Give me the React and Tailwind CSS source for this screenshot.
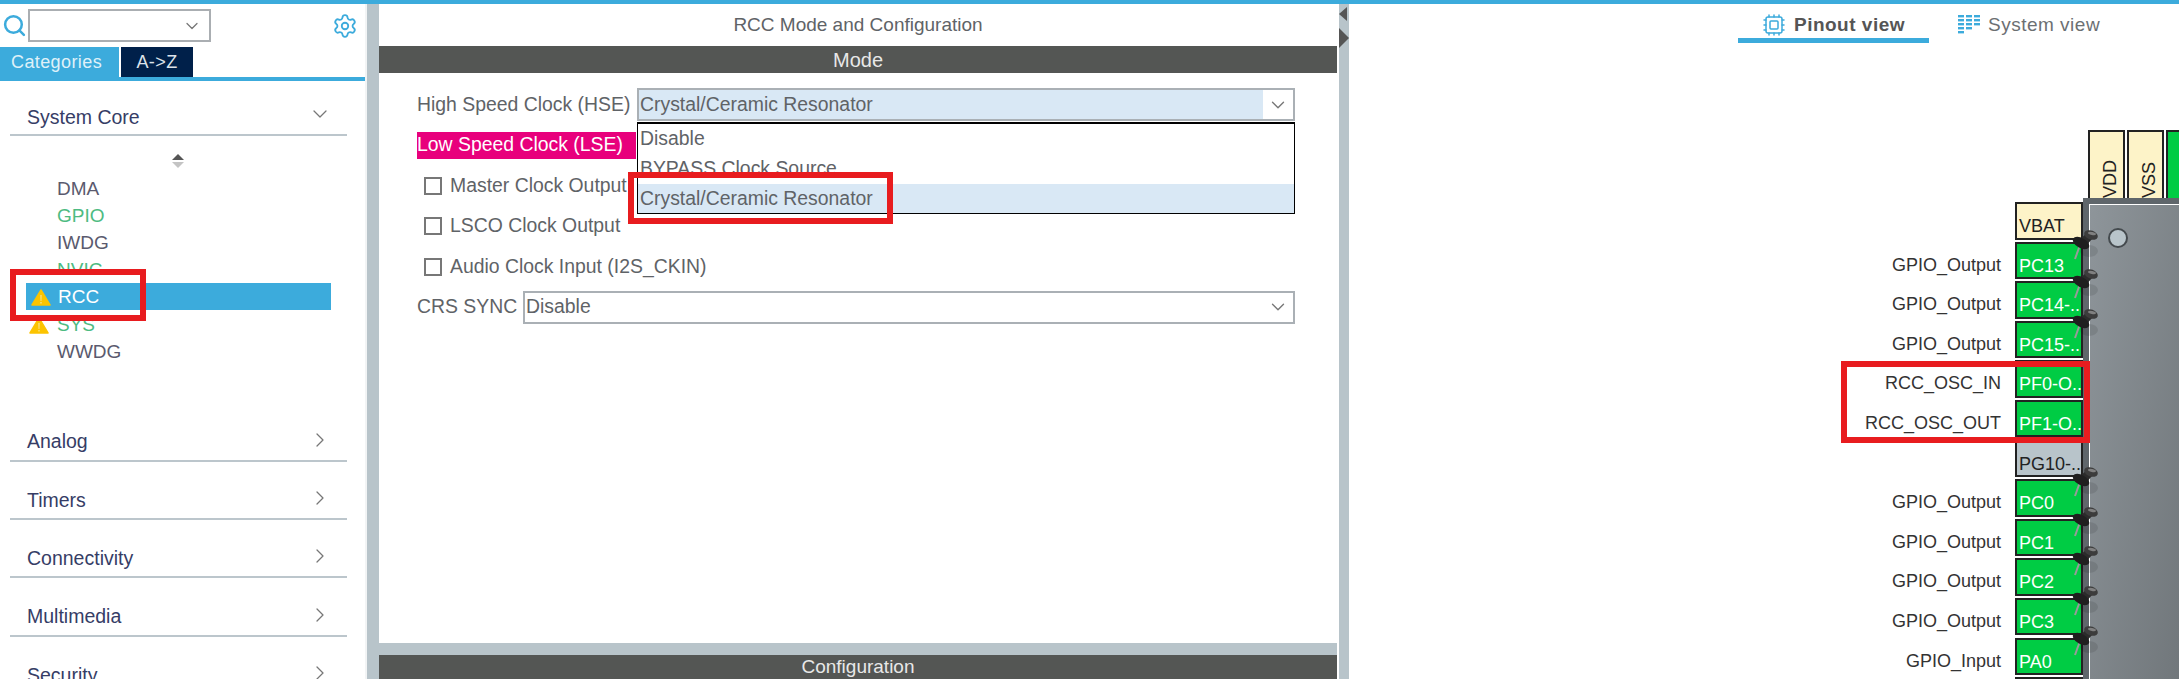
import { ChevronDown, ChevronRight, Cpu, Search, Settings } from "lucide-react";

const CORE_ITEMS = [
  { name: "DMA", tone: "text-[#5a5a6e]" },
  { name: "GPIO", tone: "text-[#4dbb82]" },
  { name: "IWDG", tone: "text-[#5a5a6e]" },
  { name: "NVIC", tone: "text-[#4dbb82]" },
  { name: "RCC", selected: true, warn: true },
  { name: "SYS", tone: "text-[#4dbb82]", warn: true },
  { name: "WWDG", tone: "text-[#5a5a6e]" },
];

const CATEGORIES = ["Analog", "Timers", "Connectivity", "Multimedia", "Security"];

const PINS = [
  { name: "VBAT", kind: "power" },
  { name: "PC13", label: "GPIO_Output", kind: "on", pinned: true },
  { name: "PC14-..", label: "GPIO_Output", kind: "on", pinned: true },
  { name: "PC15-..", label: "GPIO_Output", kind: "on", pinned: true },
  { name: "PF0-O..", label: "RCC_OSC_IN", kind: "on" },
  { name: "PF1-O..", label: "RCC_OSC_OUT", kind: "on" },
  { name: "PG10-..", kind: "off" },
  { name: "PC0", label: "GPIO_Output", kind: "on", pinned: true },
  { name: "PC1", label: "GPIO_Output", kind: "on", pinned: true },
  { name: "PC2", label: "GPIO_Output", kind: "on", pinned: true },
  { name: "PC3", label: "GPIO_Output", kind: "on", pinned: true },
  { name: "PA0", label: "GPIO_Input", kind: "on", pinned: true },
  { name: "", kind: "off" },
];

const PIN_TONES = {
  power: "bg-[#fdf3c8] text-[#222]",
  on: "bg-[#00cc44] text-white",
  off: "bg-[#b8c4ca] text-[#222]",
};

function WarnIcon({ className }) {
  return (
    <svg viewBox="0 0 20 17" className={className}>
      <path d="M10 1 L19 16 H1 Z" fill="#fcc400" stroke="#fcc400" strokeWidth="1.5" strokeLinejoin="round" />
      <path d="M9.4 6 H10.6 L10.4 12 H9.6 Z M9.4 13 H10.6 V14.6 H9.4 Z" fill="#f5e6a0" />
    </svg>
  );
}

function PushPin() {
  return (
    <svg viewBox="0 0 26 32" className="absolute right-[-17px] top-[-15px] z-10 h-[32px] w-[26px]">
      <ellipse cx="17" cy="22" rx="9" ry="6" fill="#000" opacity="0.1" />
      <path d="M3 30 L8 16" stroke="#9a9a9a" strokeWidth="2" />
      <path d="M7 11 L15 4 L20 10 L13 18 Z" fill="#2b2b2b" />
      <ellipse cx="9" cy="14" rx="9" ry="5" fill="#1f1f1f" transform="rotate(30 9 14)" />
      <ellipse cx="19" cy="6" rx="7" ry="4.5" fill="#3c3c3c" transform="rotate(20 19 6)" />
      <ellipse cx="20" cy="4.5" rx="4" ry="1.5" fill="#808080" transform="rotate(10 20 4.5)" />
    </svg>
  );
}

function RedBox({ className }) {
  return <div className={`pointer-events-none absolute z-20 border-[6px] border-[#e81c1f] ${className}`} />;
}

function Sidebar() {
  return (
    <aside className="relative w-[367px] shrink-0 border-r-2 border-[#f2f4f5] bg-white">
      <div className="flex h-[43px] items-center pl-[2px]">
        <Search size={25} strokeWidth={2.4} className="text-[#3cabdc]" />
        <div className="ml-[1px] flex h-[33px] w-[183px] items-center justify-end border-2 border-[#aaaeb2] pr-[7px]">
          <ChevronDown size={20} strokeWidth={1.5} className="text-[#777]" />
        </div>
        <Settings size={26} strokeWidth={1.7} className="ml-[121px] text-[#3cabdc]" />
      </div>
      <div className="flex h-[30px] text-[18px] tracking-[0.4px]">
        <div className="flex w-[119px] items-center bg-[#3cabdc] pl-[11px] text-[#dff1f9]">Categories</div>
        <div className="ml-[2px] flex w-[72px] items-center justify-center bg-[#00204a] text-[#dde3ea]">A-&gt;Z</div>
      </div>
      <div className="h-[4px] bg-[#3cabdc]" />
      <div className="ml-[10px] mr-[18px] flex h-[55px] items-end justify-between border-b-2 border-[#bcc6cc] pb-[2px] pl-[17px] text-[19.5px] text-[#363d66]">
        <span>System Core</span>
        <ChevronDown size={24} strokeWidth={1.25} className="mb-[6px] mr-[15px] text-[#777]" />
      </div>
      <div className="flex h-[38px] flex-col items-center pr-[10px] pt-[18px]">
        <div className="h-0 w-0 border-x-[6px] border-b-[6px] border-x-transparent border-b-[#555]" />
        <div className="mt-[2px] h-0 w-0 border-x-[6px] border-t-[6px] border-x-transparent border-t-[#c4c4c4]" />
      </div>
      <div className="text-[19px]">
        {CORE_ITEMS.map((item) =>
          item.selected ? (
            <div
              key={item.name}
              className="relative ml-[26px] flex h-[27.2px] w-[305px] items-center bg-[#3cabdc] pl-[5px] pt-[2px] text-white shadow-[0_-8px_0_0_#fff,-10px_0_0_0_#fff]"
            >
              <WarnIcon className="h-[17px] w-[20px]" />
              <span className="ml-[7px]">{item.name}</span>
            </div>
          ) : (
            <div key={item.name} className={`flex h-[27.2px] items-center pl-[29px] pt-[3px] ${item.tone}`}>
              <span className="w-[28px]">{item.warn && <WarnIcon className="h-[17px] w-[20px]" />}</span>
              <span>{item.name}</span>
            </div>
          )
        )}
      </div>
      <div className="mt-[39px]">
        {CATEGORIES.map((name) => (
          <div
            key={name}
            className="ml-[10px] mr-[18px] flex h-[58.3px] items-end justify-between border-b-2 border-[#bcc6cc] pb-[3px] pl-[17px] text-[19.5px] text-[#363d66]"
          >
            <span>{name}</span>
            <ChevronRight size={24} strokeWidth={1.25} className="mb-[5px] mr-[15px] text-[#777]" />
          </div>
        ))}
      </div>
      <RedBox className="left-[10px] top-[265px] h-[52px] w-[136px]" />
    </aside>
  );
}

function SelectBox({ value, active, className }) {
  return (
    <div className={`flex h-[33px] items-stretch border-2 border-[#aab0b5] ${className}`}>
      <div className={`flex flex-1 items-center pl-[1px] ${active ? "bg-[#d9e8f5]" : ""}`}>{value}</div>
      <div className="flex w-[30px] items-center justify-center">
        <ChevronDown size={22} strokeWidth={1.5} className="text-[#777]" />
      </div>
    </div>
  );
}

function CheckRow({ label }) {
  return (
    <div className="flex h-[33px] items-center pl-[7px]">
      <span className="mr-[8px] h-[18px] w-[18px] border-2 border-[#777]" />
      {label}
    </div>
  );
}

function ModePanel() {
  return (
    <main className="flex w-[958px] shrink-0 flex-col text-[19.4px] text-[#5f6367]">
      <div className="flex h-[42px] shrink-0 items-center justify-center bg-white text-[19px]">RCC Mode and Configuration</div>
      <div className="flex h-[27px] shrink-0 items-center justify-center bg-[#545654] text-[20px] text-[#e8e8e8]">Mode</div>
      <div className="relative flex flex-1 flex-col gap-[7.5px] bg-white pl-[38px] pt-[15px]">
        <div className="relative flex items-center">
          <span className="w-[220px]">High Speed Clock (HSE)</span>
          <SelectBox value="Crystal/Ceramic Resonator" active className="w-[658px]" />
          <div className="absolute left-[220px] top-[34px] z-10 w-[658px] border border-t-2 border-black bg-white">
            <div className="flex h-[30px] items-center pl-[2px]">Disable</div>
            <div className="flex h-[30px] items-center pl-[2px]">BYPASS Clock Source</div>
            <div className="flex h-[29px] items-center bg-[#d9e8f5] pl-[2px] shadow-[0_-5px_0_0_#fff]">Crystal/Ceramic Resonator</div>
          </div>
        </div>
        <div className="flex h-[33px] items-center">
          <span className="flex h-[27px] w-[219px] items-center bg-[#e8007c] text-white">Low Speed Clock (LSE)</span>
        </div>
        <CheckRow label="Master Clock Output" />
        <CheckRow label="LSCO Clock Output" />
        <CheckRow label="Audio Clock Input (I2S_CKIN)" />
        <div className="flex items-center">
          <span className="w-[106px]">CRS SYNC</span>
          <SelectBox value="Disable" className="w-[772px]" />
        </div>
        <RedBox className="left-[249px] top-[99px] h-[52px] w-[265px]" />
      </div>
      <div className="h-[12px] shrink-0 bg-[#b8c4ca]" />
      <div className="flex h-[24px] shrink-0 items-center justify-center bg-[#545654] text-[19px] text-[#e8e8e8]">Configuration</div>
    </main>
  );
}

function SystemViewIcon() {
  return (
    <svg viewBox="0 0 22 20" className="h-[20px] w-[22px]" fill="#3cabdc">
      {[0, 4, 8, 12, 16].map((y) => (
        <rect key={y} x="0" y={y} width="6" height="2.4" />
      ))}
      {[0, 4, 8, 12].map((y) => (
        <rect key={y} x="8" y={y} width="6" height="2.4" />
      ))}
      {[0, 4, 8].map((y) => (
        <rect key={y} x="16" y={y} width="6" height="2.4" />
      ))}
    </svg>
  );
}

function TopPin({ name }) {
  return (
    <div className="flex h-[68px] w-[37px] items-end justify-end border-2 border-b-0 border-[#222] bg-[#fdf3c8] pr-[4px] text-[18px] text-[#222]">
      <span className="leading-none [writing-mode:vertical-rl] rotate-180">{name}</span>
    </div>
  );
}

function PinoutPanel() {
  return (
    <section className="relative flex min-w-0 flex-1 flex-col overflow-hidden bg-white">
      <div className="flex h-[39px] shrink-0 pl-[389px] text-[19px]">
        <div className="flex w-[191px] items-center justify-center gap-[8px] border-b-[5px] border-[#3cabdc] pt-[8px] font-bold tracking-[0.5px] text-[#555]">
          <Cpu size={24} strokeWidth={1.5} className="text-[#3cabdc]" />
          Pinout view
        </div>
        <div className="ml-[29px] flex items-center gap-[8px] pb-[5px] pt-[8px] tracking-[0.5px] text-[#6c6f72]">
          <SystemViewIcon />
          System view
        </div>
      </div>
      <div className="flex flex-1 justify-end text-[18px]">
        <div className="pt-[159px]">
          {PINS.map((pin, i) => (
            <div key={i} className="flex h-[39.6px] justify-end">
              {pin.label && <span className="mr-[14px] mt-[10px] text-[#333]">{pin.label}</span>}
              <div className={`relative h-[37.5px] w-[68px] border-2 border-[#222] pl-[2px] pt-[9px] ${PIN_TONES[pin.kind]}`}>
                <span className="block whitespace-nowrap">{pin.name}</span>
                {pin.pinned && <PushPin />}
              </div>
            </div>
          ))}
        </div>
        <div className="flex w-[96px] flex-col pt-[87px]">
          <div className="flex gap-[2px] pl-[5px]">
            <TopPin name="VDD" />
            <TopPin name="VSS" />
            <div className="h-[68px] flex-1 border-2 border-b-0 border-r-0 border-[#222] bg-[#00cc44]" />
          </div>
          <div className="flex-1 border-l-[6px] border-t-[6px] border-[#5f666b] bg-[#5f666b]">
            <div className="h-full border-l border-t border-white bg-linear-to-br from-[#8e959a] to-[#70767a] pl-[18px] pt-[23px]">
              <div className="h-[20px] w-[20px] rounded-full border-2 border-[#444a4e] bg-[#b8c4ca]" />
            </div>
          </div>
        </div>
      </div>
      <RedBox className="left-[492px] top-[357px] h-[82px] w-[249px]" />
    </section>
  );
}

export default function App() {
  return (
    <div className="flex h-[679px] w-[2179px] flex-col overflow-hidden bg-white font-['Liberation_Sans',sans-serif]">
      <div className="h-[4px] shrink-0 bg-[#3cabdc]" />
      <div className="flex min-h-0 flex-1">
        <Sidebar />
        <div className="w-[12px] shrink-0 bg-[#b8c4ca]" />
        <ModePanel />
        <div className="w-[2px] shrink-0 bg-white" />
        <div className="relative w-[10px] shrink-0 bg-[#b8c4ca]">
          <div className="absolute left-0 top-[3px] h-0 w-0 border-y-[7px] border-r-[8px] border-y-transparent border-r-[#555]" />
          <div className="absolute left-0 top-[24px] h-0 w-0 border-y-[10px] border-l-[10px] border-y-transparent border-l-[#555]" />
        </div>
        <PinoutPanel />
      </div>
    </div>
  );
}
